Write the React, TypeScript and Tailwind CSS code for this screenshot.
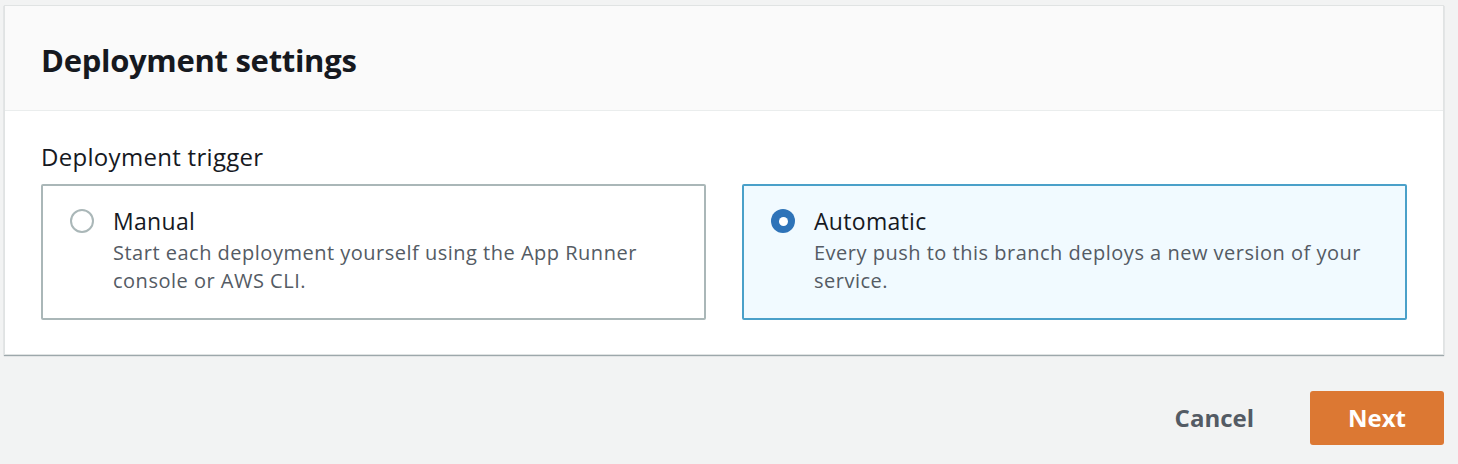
const options = [
  {
    id: 'manual',
    title: 'Manual',
    description: 'Start each deployment yourself using the App Runner console or AWS CLI.',
  },
  {
    id: 'automatic',
    title: 'Automatic',
    description: 'Every push to this branch deploys a new version of your service.',
  },
];

function Radio({ checked }: { checked: boolean }) {
  if (checked) {
    return (
      <span className="mt-[2px] flex h-[24px] w-[24px] shrink-0 items-center justify-center rounded-full bg-[#2e73b8]">
        <span className="h-[9px] w-[9px] rounded-full bg-white" />
      </span>
    );
  }
  return <span className="mt-[2px] h-[24px] w-[24px] shrink-0 rounded-full border-2 border-[#aab7b8] bg-white" />;
}

export default function App() {
  const selected = 'automatic';

  return (
    <div
      className="h-[464px] w-[1458px] bg-[#f2f3f3] pt-[5px] pl-[4px]"
      style={{ fontFamily: '"Open Sans", "Noto Sans", sans-serif' }}
    >
      <section className="w-[1440px] border border-[#e0e3e3] bg-white shadow-[0_1px_1px_0_rgba(0,28,36,0.35)]">
        <header className="flex h-[105px] items-center border-b border-[#eaeded] bg-[#fafafa] px-[36px]">
          <h2 className="pt-[4px] text-[31px] font-bold tracking-[-0.3px] text-[#16191f]">Deployment settings</h2>
        </header>

        <div className="px-[36px] pt-[31px] pb-[34px]">
          <p className="mb-[12px] text-[24px] leading-[30px] tracking-[0.3px] text-[#16191f]">Deployment trigger</p>
          <div className="grid grid-cols-2 gap-[36px]">
            {options.map((option) => {
              const isSelected = option.id === selected;
              return (
                <label
                  key={option.id}
                  className={
                    isSelected
                      ? 'flex h-[136px] gap-[19px] rounded-[2px] border-2 border-[#4aa0c9] bg-[#f1faff] pl-[27px] pr-[20px] pt-[21px]'
                      : 'flex h-[136px] gap-[19px] rounded-[2px] border-2 border-[#aab7b8] bg-white pl-[27px] pr-[20px] pt-[21px]'
                  }
                >
                  <Radio checked={isSelected} />
                  <span className="flex flex-col">
                    <span className="text-[23px] leading-[28px] tracking-[0.3px] text-[#16191f]">{option.title}</span>
                    <span className="mt-[4px] max-w-[580px] text-[20px] leading-[28px] tracking-[0.5px] text-[#545b64]">
                      {option.description}
                    </span>
                  </span>
                </label>
              );
            })}
          </div>
        </div>
      </section>

      <div className="mt-[36px] flex w-[1440px] items-center justify-end gap-[36px]">
        <button className="px-[20px] text-[24px] font-bold text-[#545b64]">Cancel</button>
        <button className="h-[54px] w-[134px] rounded-[3px] bg-[#dc7833] text-[24px] font-bold text-white">Next</button>
      </div>
    </div>
  );
}
